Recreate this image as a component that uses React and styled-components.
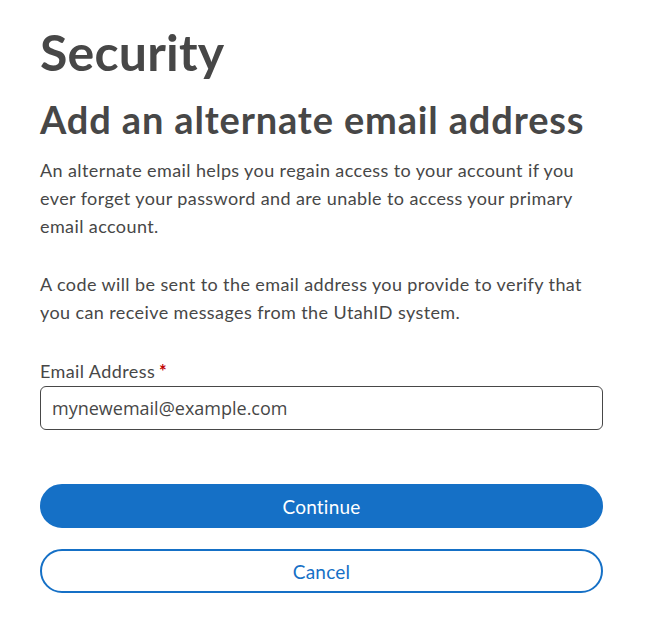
import React from "react";
import styled, { createGlobalStyle } from "styled-components";

const GlobalStyle = createGlobalStyle`
  body {
    margin: 0;
    background: #ffffff;
    font-family: "Lato", "Liberation Sans", sans-serif;
    color: #474747;
  }
`;

const Page = styled.div`
  display: flex;
  flex-direction: column;
  width: 563px;
  padding: 22px 0 0 40px;
`;

const Title = styled.h1`
  margin: 0 0 14px;
  font-size: 50px;
  line-height: 60px;
  letter-spacing: 0.2px;
  font-weight: 700;
  color: #474747;
`;

const SubTitle = styled.h2`
  margin: 0 0 14px;
  font-size: 38px;
  line-height: 46px;
  letter-spacing: 0.85px;
  font-weight: 700;
  color: #474747;
`;

const Text = styled.p`
  margin: 0 0 30px;
  font-size: 18px;
  line-height: 28px;
  letter-spacing: 0.4px;
  color: #474747;
`;

const Label = styled.label`
  display: block;
  font-size: 18px;
  line-height: 24px;
  letter-spacing: 0.4px;
  margin-top: 3px;
  margin-bottom: 3px;
  span {
    color: #c00000;
    font-weight: 700;
    margin-left: 4px;
  }
`;

const Input = styled.input`
  box-sizing: border-box;
  display: block;
  width: 100%;
  height: 44px;
  padding: 0 11px;
  border: 1px solid #474747;
  border-radius: 6px;
  font-family: "Open Sans", "Liberation Sans", sans-serif;
  font-size: 18px;
  color: #474747;
  outline: none;
`;

const Actions = styled.div`
  display: flex;
  flex-direction: column;
  gap: 21px;
  margin-top: 54px;
`;

const Button = styled.button`
  box-sizing: border-box;
  width: 100%;
  height: 44px;
  border-radius: 22px;
  font-family: "Lato", "Liberation Sans", sans-serif;
  font-size: 19px;
  letter-spacing: 0.2px;
  cursor: pointer;
  border: 2px solid #1570c6;
  background: ${(p) => (p.$primary ? "#1570c6" : "#ffffff")};
  color: ${(p) => (p.$primary ? "#ffffff" : "#1570c6")};
`;

export default function App() {
  return (
    <>
      <GlobalStyle />
      <Page>
        <Title>Security</Title>
        <SubTitle>Add an alternate email address</SubTitle>
        <Text>
          An alternate email helps you regain access to your account if you
          ever forget your password and are unable to access your primary
          email account.
        </Text>
        <Text>
          A code will be sent to the email address you provide to verify that
          you can receive messages from the UtahID system.
        </Text>
        <Label htmlFor="email">
          Email Address<span>*</span>
        </Label>
        <Input id="email" defaultValue="mynewemail@example.com" />
        <Actions>
          <Button $primary>Continue</Button>
          <Button>Cancel</Button>
        </Actions>
      </Page>
    </>
  );
}
